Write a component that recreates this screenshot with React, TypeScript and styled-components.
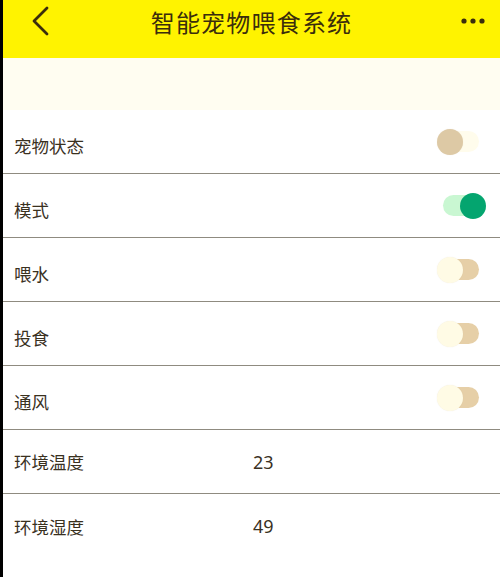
import React from "react";
import styled, { createGlobalStyle } from "styled-components";

const Global = createGlobalStyle`
  html, body { margin: 0; padding: 0; background: #ffffff; }
  body { font-family: "Noto Sans CJK SC", "Noto Sans", sans-serif; }
`;

const Page = styled.div`
  width: 500px;
  height: 577px;
  box-sizing: border-box;
  border-left: 3px solid #000;
  background: #fff;
  display: flex;
  flex-direction: column;
  overflow: hidden;
`;

const Header = styled.header`
  height: 58px;
  flex: none;
  background: #fff300;
  display: grid;
  grid-template-columns: 70px 1fr 70px;
  align-items: center;
  color: #3b2d0c;
`;

const Title = styled.h1`
  margin: 0;
  text-align: center;
  font-size: 24px;
  font-weight: 400;
  letter-spacing: 1.2px;
  line-height: 1;
  margin-top: -14px;
`;

const IconBtn = styled.div<{ $side: "left" | "right" }>`
  display: flex;
  align-items: center;
  justify-content: ${(p) => (p.$side === "left" ? "flex-start" : "flex-end")};
  padding: ${(p) => (p.$side === "left" ? "0 0 0 26px" : "0 14px 0 0")};
  margin-top: -16px;
`;

const Band = styled.div`
  height: 52px;
  flex: none;
  background: #fffdf1;
`;

const Row = styled.div<{ $last?: boolean }>`
  height: 64px;
  box-sizing: border-box;
  flex: none;
  display: flex;
  align-items: center;
  padding: 0 11px;
  border-bottom: ${(p) => (p.$last ? "none" : "1.5px solid #8f8b80")};
`;

const Label = styled.span<{ $drop: number }>`
  font-size: 17.5px;
  color: #3a311f;
  padding-top: ${(p) => p.$drop}px;
  width: 239px;
`;

const Value = styled.span`
  font-size: 18px;
  color: #3a311f;
  font-family: "Noto Sans", sans-serif;
`;

const Track = styled.div<{ $on: boolean; $tone: "cream" | "tan" }>`
  margin-left: auto;
  margin-right: 10px;
  width: 36px;
  height: 21px;
  border-radius: 11px;
  position: relative;
  background: ${(p) => (p.$on ? "#c9f7d2" : p.$tone === "tan" ? "#e6cfa7" : "#fffcec")};
`;

const Thumb = styled.div<{ $on: boolean; $tone: "cream" | "tan" }>`
  position: absolute;
  top: 50%;
  width: 26px;
  height: 26px;
  margin-top: -13px;
  border-radius: 50%;
  left: ${(p) => (p.$on ? "17px" : "-6px")};
  background: ${(p) => (p.$on ? "#04a56f" : p.$tone === "cream" ? "#ddc9a5" : "#fffbe5")};
  box-shadow: ${(p) => (p.$on ? "none" : "0 0 1px rgba(200,180,140,0.3)")};
`;

type Item =
  | { label: string; kind: "toggle"; on: boolean; tone: "cream" | "tan" }
  | { label: string; kind: "value"; value: string };

const items: Item[] = [
  { label: "宠物状态", kind: "toggle", on: false, tone: "cream" },
  { label: "模式", kind: "toggle", on: true, tone: "tan" },
  { label: "喂水", kind: "toggle", on: false, tone: "tan" },
  { label: "投食", kind: "toggle", on: false, tone: "tan" },
  { label: "通风", kind: "toggle", on: false, tone: "tan" },
  { label: "环境温度", kind: "value", value: "23" },
  { label: "环境湿度", kind: "value", value: "49" },
];

export default function App() {
  return (
    <>
      <Global />
      <Page>
        <Header>
          <IconBtn $side="left">
            <svg width="22" height="32" viewBox="0 0 22 32">
              <path d="M18 3 L5 16 L18 29" fill="none" stroke="#3b2d0c" strokeWidth="2.8" strokeLinecap="round" strokeLinejoin="round" />
            </svg>
          </IconBtn>
          <Title>智能宠物喂食系统</Title>
          <IconBtn $side="right">
            <svg width="26" height="8" viewBox="0 0 26 8">
              <circle cx="4" cy="4" r="2.6" fill="#3b2d0c" />
              <circle cx="13" cy="4" r="2.6" fill="#3b2d0c" />
              <circle cx="22" cy="4" r="2.6" fill="#3b2d0c" />
            </svg>
          </IconBtn>
        </Header>
        <Band />
        {items.map((it, i) => (
          <Row key={it.label} $last={i === items.length - 1}>
            <Label $drop={it.kind === "toggle" ? 8 : 0}>{it.label}</Label>
            {it.kind === "toggle" ? (
              <Track $on={it.on} $tone={it.tone}>
                <Thumb $on={it.on} $tone={it.tone} />
              </Track>
            ) : (
              <Value>{it.value}</Value>
            )}
          </Row>
        ))}
      </Page>
    </>
  );
}
